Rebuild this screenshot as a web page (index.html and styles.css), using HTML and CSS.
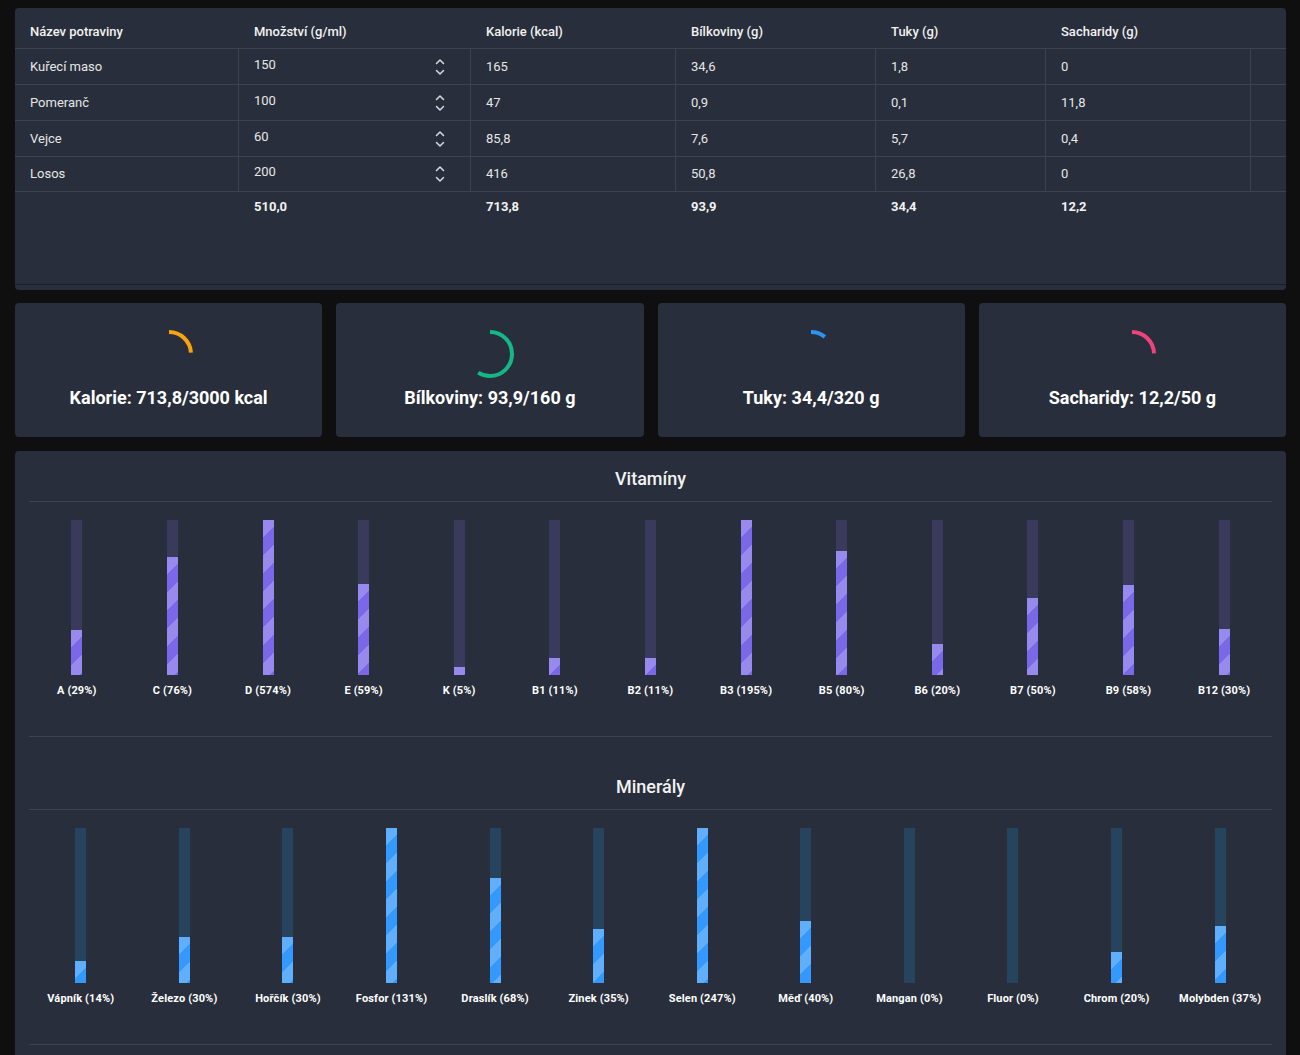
FILE: index.html
```html
<!DOCTYPE html>
<html lang="cs">
<head>
<meta charset="utf-8">
<title>Výživa</title>
<link rel="stylesheet" href="styles.css">
</head>
<body>
<div class="page">
  <div class="table-card">
    <div class="row head">
      <div class="cell">Název potraviny</div>
      <div class="cell">Množství (g/ml)</div>
      <div class="cell">Kalorie (kcal)</div>
      <div class="cell">Bílkoviny (g)</div>
      <div class="cell">Tuky (g)</div>
      <div class="cell">Sacharidy (g)</div>
      <div class="cell"></div>
    </div>
    <div class="row data">
      <div class="cell">Kuřecí maso</div>
      <div class="cell qty"><span class="qty-val">150</span><svg class="spin" viewBox="0 0 10 20" width="10" height="20"><path d="M1.5 6.5 L5 3 L8.5 6.5 M1.5 13.5 L5 17 L8.5 13.5"/></svg></div>
      <div class="cell">165</div>
      <div class="cell">34,6</div>
      <div class="cell">1,8</div>
      <div class="cell">0</div>
      <div class="cell"></div>
    </div>
    <div class="row data">
      <div class="cell">Pomeranč</div>
      <div class="cell qty"><span class="qty-val">100</span><svg class="spin" viewBox="0 0 10 20" width="10" height="20"><path d="M1.5 6.5 L5 3 L8.5 6.5 M1.5 13.5 L5 17 L8.5 13.5"/></svg></div>
      <div class="cell">47</div>
      <div class="cell">0,9</div>
      <div class="cell">0,1</div>
      <div class="cell">11,8</div>
      <div class="cell"></div>
    </div>
    <div class="row data">
      <div class="cell">Vejce</div>
      <div class="cell qty"><span class="qty-val">60</span><svg class="spin" viewBox="0 0 10 20" width="10" height="20"><path d="M1.5 6.5 L5 3 L8.5 6.5 M1.5 13.5 L5 17 L8.5 13.5"/></svg></div>
      <div class="cell">85,8</div>
      <div class="cell">7,6</div>
      <div class="cell">5,7</div>
      <div class="cell">0,4</div>
      <div class="cell"></div>
    </div>
    <div class="row data last">
      <div class="cell">Losos</div>
      <div class="cell qty"><span class="qty-val">200</span><svg class="spin" viewBox="0 0 10 20" width="10" height="20"><path d="M1.5 6.5 L5 3 L8.5 6.5 M1.5 13.5 L5 17 L8.5 13.5"/></svg></div>
      <div class="cell">416</div>
      <div class="cell">50,8</div>
      <div class="cell">26,8</div>
      <div class="cell">0</div>
      <div class="cell"></div>
    </div>
    <div class="row total">
      <div class="cell"></div>
      <div class="cell">510,0</div>
      <div class="cell">713,8</div>
      <div class="cell">93,9</div>
      <div class="cell">34,4</div>
      <div class="cell">12,2</div>
      <div class="cell"></div>
    </div>
    <div class="scroll-line"></div>
  </div>

  <div class="macro-cards">
    <div class="macro-card">
      <svg class="ring" viewBox="0 0 48 48" width="48" height="48"><circle class="arc arc-kal" cx="24" cy="24" r="22" style="stroke-dasharray: 32.9 200"/></svg>
      <div class="macro-label">Kalorie: 713,8/3000 kcal</div>
    </div>
    <div class="macro-card">
      <svg class="ring" viewBox="0 0 48 48" width="48" height="48"><circle class="arc arc-pro" cx="24" cy="24" r="22" style="stroke-dasharray: 81.1 200"/></svg>
      <div class="macro-label">Bílkoviny: 93,9/160 g</div>
    </div>
    <div class="macro-card">
      <svg class="ring" viewBox="0 0 48 48" width="48" height="48"><circle class="arc arc-fat" cx="24" cy="24" r="22" style="stroke-dasharray: 14.9 200"/></svg>
      <div class="macro-label">Tuky: 34,4/320 g</div>
    </div>
    <div class="macro-card">
      <svg class="ring" viewBox="0 0 48 48" width="48" height="48"><circle class="arc arc-carb" cx="24" cy="24" r="22" style="stroke-dasharray: 33.7 200"/></svg>
      <div class="macro-label">Sacharidy: 12,2/50 g</div>
    </div>
  </div>

  <div class="panel">
    <section class="nutri-section vit">
      <h2 class="sec-title">Vitamíny</h2>
      <div class="bars">
        <div class="bar-item"><div class="track"><div class="fill" style="height:29%"></div></div><div class="bar-label">A (29%)</div></div>
        <div class="bar-item"><div class="track"><div class="fill" style="height:76%"></div></div><div class="bar-label">C (76%)</div></div>
        <div class="bar-item"><div class="track"><div class="fill" style="height:100%"></div></div><div class="bar-label">D (574%)</div></div>
        <div class="bar-item"><div class="track"><div class="fill" style="height:59%"></div></div><div class="bar-label">E (59%)</div></div>
        <div class="bar-item"><div class="track"><div class="fill" style="height:5%"></div></div><div class="bar-label">K (5%)</div></div>
        <div class="bar-item"><div class="track"><div class="fill" style="height:11%"></div></div><div class="bar-label">B1 (11%)</div></div>
        <div class="bar-item"><div class="track"><div class="fill" style="height:11%"></div></div><div class="bar-label">B2 (11%)</div></div>
        <div class="bar-item"><div class="track"><div class="fill" style="height:100%"></div></div><div class="bar-label">B3 (195%)</div></div>
        <div class="bar-item"><div class="track"><div class="fill" style="height:80%"></div></div><div class="bar-label">B5 (80%)</div></div>
        <div class="bar-item"><div class="track"><div class="fill" style="height:20%"></div></div><div class="bar-label">B6 (20%)</div></div>
        <div class="bar-item"><div class="track"><div class="fill" style="height:50%"></div></div><div class="bar-label">B7 (50%)</div></div>
        <div class="bar-item"><div class="track"><div class="fill" style="height:58%"></div></div><div class="bar-label">B9 (58%)</div></div>
        <div class="bar-item"><div class="track"><div class="fill" style="height:30%"></div></div><div class="bar-label">B12 (30%)</div></div>
      </div>
    </section>
    <section class="nutri-section min">
      <h2 class="sec-title">Minerály</h2>
      <div class="bars">
        <div class="bar-item"><div class="track"><div class="fill" style="height:14%"></div></div><div class="bar-label">Vápník (14%)</div></div>
        <div class="bar-item"><div class="track"><div class="fill" style="height:30%"></div></div><div class="bar-label">Železo (30%)</div></div>
        <div class="bar-item"><div class="track"><div class="fill" style="height:30%"></div></div><div class="bar-label">Hořčík (30%)</div></div>
        <div class="bar-item"><div class="track"><div class="fill" style="height:100%"></div></div><div class="bar-label">Fosfor (131%)</div></div>
        <div class="bar-item"><div class="track"><div class="fill" style="height:68%"></div></div><div class="bar-label">Draslík (68%)</div></div>
        <div class="bar-item"><div class="track"><div class="fill" style="height:35%"></div></div><div class="bar-label">Zinek (35%)</div></div>
        <div class="bar-item"><div class="track"><div class="fill" style="height:100%"></div></div><div class="bar-label">Selen (247%)</div></div>
        <div class="bar-item"><div class="track"><div class="fill" style="height:40%"></div></div><div class="bar-label">Měď (40%)</div></div>
        <div class="bar-item"><div class="track"><div class="fill" style="height:0%"></div></div><div class="bar-label">Mangan (0%)</div></div>
        <div class="bar-item"><div class="track"><div class="fill" style="height:0%"></div></div><div class="bar-label">Fluor (0%)</div></div>
        <div class="bar-item"><div class="track"><div class="fill" style="height:20%"></div></div><div class="bar-label">Chrom (20%)</div></div>
        <div class="bar-item"><div class="track"><div class="fill" style="height:37%"></div></div><div class="bar-label">Molybden (37%)</div></div>
      </div>
    </section>
  </div>
</div>
</body>
</html>
```

FILE: styles.css
```css
* { box-sizing: border-box; }

body {
  margin: 0;
  background: #0f0f10;
  color: #ededed;
  font-family: Roboto, "Noto Sans", "Liberation Sans", sans-serif;
}

.page {
  padding: 8px 14px 30px 15px;
}

/* ---------- table ---------- */
.table-card {
  background: #282e3b;
  border-radius: 4px;
  height: 282px;
  display: flex;
  flex-direction: column;
  font-size: 13px;
}

.row {
  display: grid;
  grid-template-columns: 223px 232px 205px 200px 170px 205px 1fr;
}

.cell {
  padding-left: 15px;
  white-space: nowrap;
  overflow: hidden;
}

.row .cell + .cell {
  border-left: 1px solid transparent;
}

.head {
  height: 41px;
  border-bottom: 1px solid #3c4250;
}

.head .cell {
  padding-top: 7px;
  line-height: 33px;
  font-weight: 500;
  color: #f2f2f2;
}

.data {
  height: 36px;
  border-bottom: 1px solid #3c4250;
}

.data.last {
  height: 35px;
}

.data .cell {
  line-height: 35px;
  color: #e6e6e6;
}

.data.last .cell {
  line-height: 33px;
}

.data .cell + .cell {
  border-left-color: #3c4250;
}

.cell.qty {
  display: flex;
  align-items: center;
  padding-right: 25px;
}

.qty-val {
  flex: 1;
  line-height: 16px;
  margin-bottom: 4px;
}

.spin {
  display: block;
  fill: none;
  stroke: #d9dce2;
  stroke-width: 1.5;
  stroke-linecap: round;
  stroke-linejoin: round;
}

.total {
  height: 28px;
}

.total .cell {
  padding-top: 2px;
  line-height: 26px;
  font-weight: 700;
  color: #f2f2f2;
}

.scroll-line {
  margin-top: auto;
  margin-bottom: 5px;
  height: 1px;
  background: #1b1f27;
}

/* ---------- macro cards ---------- */
.macro-cards {
  margin-top: 13px;
  display: grid;
  grid-template-columns: repeat(4, 1fr);
  gap: 14px;
}

.macro-card {
  height: 134px;
  background: #282e3b;
  border-radius: 4px;
  display: flex;
  flex-direction: column;
  align-items: center;
  padding-top: 27px;
}

.ring {
  display: block;
  transform: rotate(-90deg);
}

.arc {
  fill: none;
  stroke-width: 4;
}

.arc-kal { stroke: #f9a30e; }
.arc-pro { stroke: #14b886; }
.arc-fat { stroke: #2b93f0; }
.arc-carb { stroke: #f0437c; }

.macro-label {
  margin-top: 9px;
  font-size: 18px;
  line-height: 22px;
  font-weight: 700;
  color: #ffffff;
}

/* ---------- vitamins & minerals ---------- */
.panel {
  margin-top: 14px;
  background: #282e3b;
  border-radius: 4px;
  padding: 16px 14px 40px;
}

.nutri-section + .nutri-section {
  padding-top: 38px;
}

.sec-title {
  margin: 0;
  text-align: center;
  font-size: 18px;
  line-height: 24px;
  font-weight: 500;
  color: #f2f2f2;
  padding-bottom: 10px;
  border-bottom: 1px solid #3d4351;
}

.bars {
  display: flex;
  padding-top: 18px;
  padding-bottom: 37px;
  border-bottom: 1px solid #3d4351;
}

.bar-item {
  flex: 1;
  display: flex;
  flex-direction: column;
  align-items: center;
}

.track {
  width: 11px;
  height: 155px;
  display: flex;
  flex-direction: column;
  justify-content: flex-end;
}

.fill {
  width: 100%;
  background-image: repeating-linear-gradient(135deg,
    rgba(255, 255, 255, 0.22) 0 12.7px,
    rgba(255, 255, 255, 0) 12.7px 25.4px);
}

.vit .track { background: #393a5c; }
.vit .fill { background-color: #7a68e8; }
.min .track { background: #27445f; }
.min .fill { background-color: #3399ff; }

.bar-label {
  margin-top: 8px;
  font-size: 11px;
  line-height: 16px;
  font-weight: 700;
  letter-spacing: 0.15px;
  color: #ffffff;
  white-space: nowrap;
}
```
